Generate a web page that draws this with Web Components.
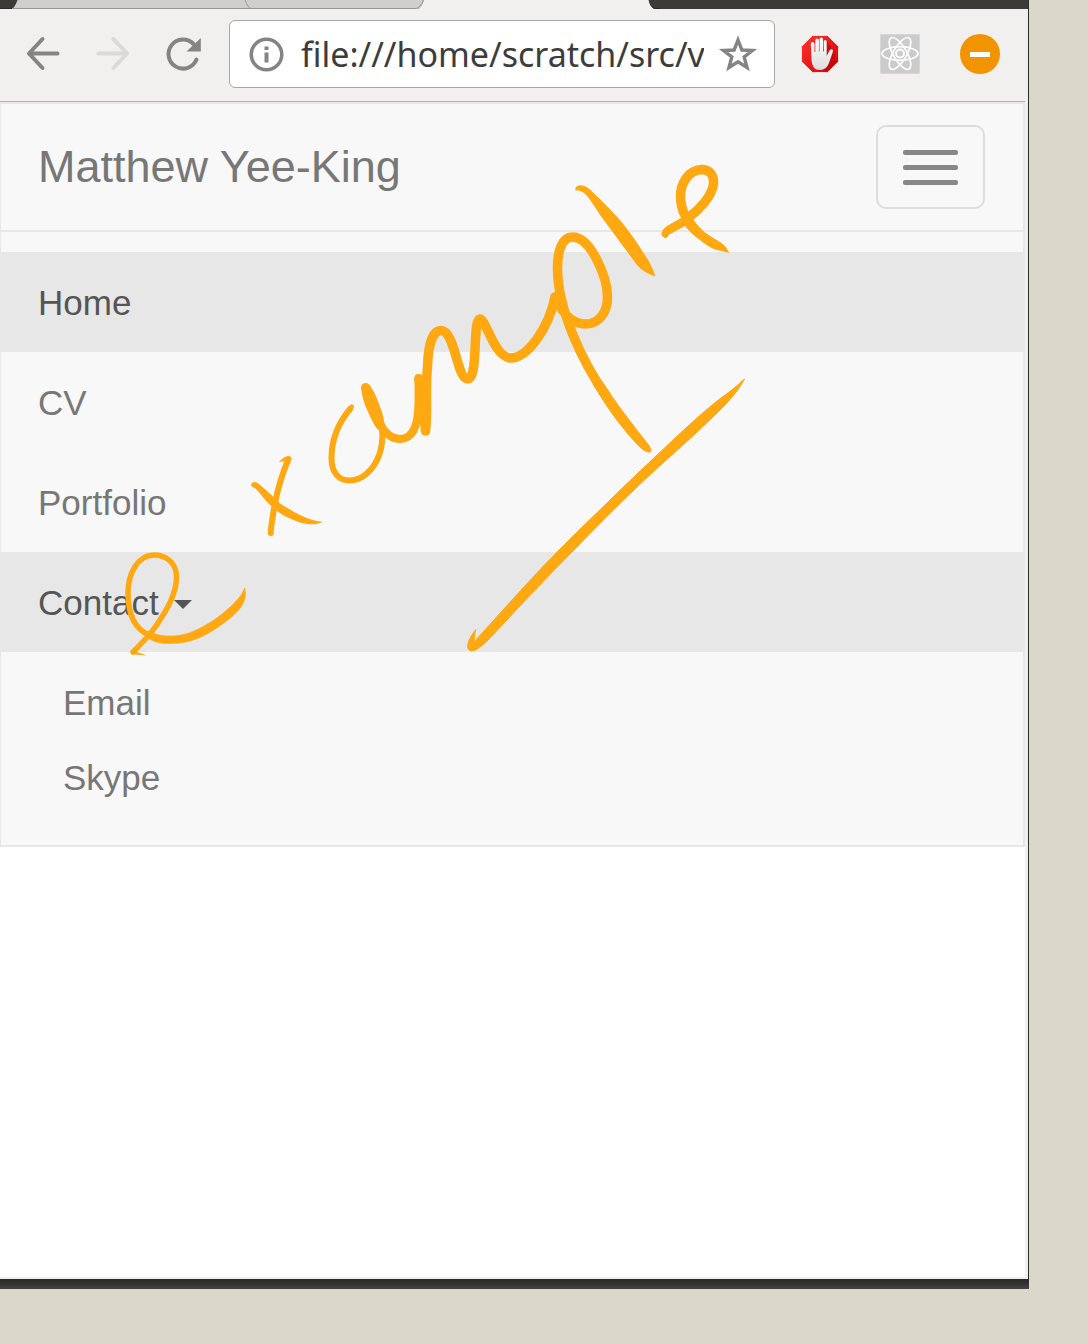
<!DOCTYPE html>
<html lang="en">
<head>
<meta charset="utf-8">
<meta name="viewport" content="width=device-width, initial-scale=1">
<title>Matthew Yee-King</title>
<style>
html, body { margin: 0; }
body { background: #dad8cb; font-family: "Liberation Sans", Arial, sans-serif; }
</style>
</head>
<body>
<desk-view>
  <browser-window>
    <tab-strip slot="tabs"></tab-strip>
    <tool-bar slot="bar" address="file:///home/scratch/src/v"></tool-bar>
    <site-nav brand="Matthew Yee-King">
      <nav-item active>Home</nav-item>
      <nav-item>CV</nav-item>
      <nav-item>Portfolio</nav-item>
      <nav-item active caret>Contact
        <sub-item slot="menu">Email</sub-item>
        <sub-item slot="menu">Skype</sub-item>
      </nav-item>
    </site-nav>
  </browser-window>
  <ink-note slot="ink"></ink-note>
</desk-view>

<script>
function define(name, html, setup) {
  const template = document.createElement('template');
  template.innerHTML = html;
  customElements.define(name, class extends HTMLElement {
    constructor() {
      super();
      this.attachShadow({ mode: 'open' }).append(template.content.cloneNode(true));
    }
    connectedCallback() {
      if (setup) setup(this, this.shadowRoot);
    }
  });
}

define('desk-view', `
<style>
:host { display: flex; box-sizing: border-box; min-height: 100vh; padding: 0 59px 55px 0; position: relative; overflow: hidden; }
::slotted(browser-window) { flex: 1; }
</style>
<slot></slot><slot name="ink"></slot>`);

define('browser-window', `
<style>
:host { display: flex; flex-direction: column; min-width: 0; border-right: 1px solid #2d2c28; background: #f1f0ee; }
main { flex: 1; margin-right: 3px; border-top: 1px solid #b1b1b0; border-bottom: 2px solid #f1f0f0; background: #fff; }
footer { height: 10px; background: linear-gradient(#2b2b2a, #2f2f2e 40%, #454442); margin-right: -1px; }
</style>
<slot name="tabs"></slot><slot name="bar"></slot>
<main><slot></slot></main>
<footer></footer>`);

define('tab-strip', `
<style>
:host { display: block; height: 9px; overflow: hidden; background: #3c3b37; }
svg { display: block; }
</style>
<svg width="660" height="9" viewBox="0 0 660 9" aria-hidden="true">
  <path d="M0 8.5H12" stroke="#2c2b28"/>
  <path d="M12 9Q15 7 17.500 0H424Q421 8.500 418 9Z" fill="#d0cfcd"/>
  <path d="M424 0H649Q651 9 656 9H418Q421 8.500 424 0Z" fill="#f1f0ee"/>
  <path d="M12 8.500H416Q420 8 423.500 0M245 0Q248 8 251 8.500" fill="none" stroke="#999896"/>
  <path d="M649 0Q651 8.500 655 8.500H660" fill="none" stroke="#2c2b28"/>
</svg>`);

define('tool-bar', `
<style>
:host { display: flex; align-items: center; height: 92px; box-sizing: border-box; padding: 0 28px 2px 23px; }
button { width: 40px; height: 40px; padding: 0; border: 0; background: none; flex: none; display: block; }
svg { display: block; }
.moves, .tools { display: flex; }
.moves { gap: 30px; }
.tools { gap: 40px; }
form { flex: 1; min-width: 0; display: flex; align-items: center; height: 68px; box-sizing: border-box; margin: 0 25px 0 26px; padding: 0 16px; border: 1px solid #a8a7a5; border-radius: 6px; background: #fff; }
input { flex: 1; min-width: 0; margin: 0 14px; padding: 0; border: 0; outline: 0; height: 50px; background: none; color: #3c3c3c; font: 34px "Noto Sans", sans-serif; }
</style>
<div class="moves">
  <button aria-label="Back"><svg width="40" height="40" fill="none" stroke="#848484" stroke-width="4" stroke-linecap="round" stroke-linejoin="round"><path d="M19.500 5L6 19.500L19.500 34M6 19.500H34.500"/></svg></button>
  <button aria-label="Forward" disabled><svg width="40" height="40" fill="none" stroke="#dbdad9" stroke-width="4" stroke-linecap="round" stroke-linejoin="round"><path d="M20.500 5L34 19.500L20.500 34M34 19.500H5.500"/></svg></button>
  <button aria-label="Reload"><svg width="40" height="40"><path d="M33.500 25.500A14.500 14.500 0 1 1 30.500 10" fill="none" stroke="#848484" stroke-width="4" stroke-linecap="round"/><path d="M37.800 4V17.500H23.500Z" fill="#848484"/></svg></button>
</div>
<form>
  <svg width="41" height="40" aria-hidden="true"><circle cx="20.500" cy="20.500" r="15.300" fill="none" stroke="#848484" stroke-width="3.500"/><path d="M18.500 12.500h4v3.500h-4zM18.500 18.500h4v10h-4z" fill="#848484"/></svg>
  <input type="text" aria-label="Address">
  <button type="button" aria-label="Bookmark"><svg width="40" height="40"><path d="M20 6L23.900 16L34.500 16.500L26.200 23L29 33.500L20 27.700L11 33.500L13.800 23L5.500 16.500L16.100 16Z" fill="none" stroke="#848484" stroke-width="3.400"/></svg></button>
</form>
<div class="tools">
  <button aria-label="Ad blocker"><svg width="40" height="40">
    <defs><linearGradient id="red" x1="0" y1="0" x2="1" y2="1"><stop stop-color="#ff3434"/><stop offset="1" stop-color="#d40000"/></linearGradient>
    <linearGradient id="palm" x1="0" y1="0" x2="0" y2="1"><stop stop-color="#fff"/><stop offset="1" stop-color="#dcdcdc"/></linearGradient></defs>
    <path d="M12.500 1.500H27.500L38.500 12.500V27.500L27.500 38.500H12.500L1.500 27.500V12.500Z" fill="url(#red)" stroke="#f7dada" stroke-width="1"/>
    <path d="M13 28L25 37L31 34L36 28L34 18L27 7Z" fill="#a00000" opacity=".4"/>
    <path d="M11.500 26L10.800 10Q10.900 8 12.500 8Q14.200 8 14.500 10V18H15.300V6Q15.500 4.500 17 4.500Q18.700 4.500 18.900 6V17.500H19.500V5Q19.700 3.500 21.200 3.500Q23 3.500 23 5V17.500H23.700V7.500Q23.900 6 25.300 6Q26.700 6 26.700 8V22L29.500 16.500Q30.500 14.700 32 15.300Q33.500 16 32.800 18L29 29Q26.500 36 20 36Q12 36 11.500 26Z" fill="url(#palm)"/>
  </svg></button>
  <button aria-label="React developer tools"><svg width="40" height="40" fill="none" stroke="#fff" stroke-width="1.700">
    <path d="M.500 .500H39.500V39.500H.500Z" fill="#cbcbcb" stroke="#d6d6d6" stroke-width="1"/>
    <ellipse cx="20" cy="19.500" rx="18" ry="6.800"/><ellipse cx="20" cy="19.500" rx="18" ry="6.800" transform="rotate(60 20 19.500)"/><ellipse cx="20" cy="19.500" rx="18" ry="6.800" transform="rotate(120 20 19.500)"/>
    <circle cx="20" cy="19.500" r="4" stroke-width="2"/>
  </svg></button>
  <button aria-label="Blocker"><svg width="40" height="40"><circle cx="20" cy="20" r="20" fill="#f29400"/><path d="M10 18H30V23H10Z" fill="#fff"/></svg></button>
</div>`, (host, root) => {
  root.querySelector('input').value = host.getAttribute('address');
});

define('site-nav', `
<style>
:host { display: block; border: 2px solid #e7e7e7; border-left-width: 1px; background: #f8f8f8; }
header { display: flex; justify-content: space-between; align-items: center; height: 126px; padding: 0 38px 0 37px; border-bottom: 2px solid #e7e7e7; }
a { color: #777; font-size: 45px; line-height: 50px; text-decoration: none; }
button { box-sizing: border-box; width: 109px; height: 84px; padding: 0 25px; display: flex; flex-direction: column; justify-content: center; gap: 10px; background: none; border: 2px solid #ddd; border-radius: 10px; }
i { height: 5px; border-radius: 2px; background: #888; align-self: stretch; }
nav { padding: 20px 0 18px; }
</style>
<header><a href="#"></a><button aria-label="Toggle navigation"><i></i><i></i><i></i></button></header>
<nav><slot></slot></nav>`, (host, root) => {
  root.querySelector('a').textContent = host.getAttribute('brand');
});

define('nav-item', `
<style>
:host { display: block; }
a { display: flex; align-items: center; gap: 15px; box-sizing: border-box; height: 100px; padding: 2px 37px 0; color: #777; font-size: 35px; line-height: 50px; text-decoration: none; }
:host([active]) a { background: #e7e7e7; color: #555; }
i { display: none; border: 9px solid transparent; border-top-color: #555; border-bottom: 0; margin-top: 2px; }
:host([caret]) i { display: block; }
:host([caret]) div { padding: 13px 0 12px; }
</style>
<a href="#"><span><slot></slot></span><i></i></a>
<div><slot name="menu"></slot></div>`);

define('sub-item', `
<style>
:host { display: block; }
a { display: flex; align-items: center; height: 75px; padding: 0 62px; color: #777; font-size: 35px; line-height: 50px; text-decoration: none; }
</style>
<a href="#"><slot></slot></a>`);

/* Freehand pen marks laid over the whole desk. */
define('ink-note', `
<style>
:host { position: absolute; top: 0; left: 0; pointer-events: none; }
svg { display: block; }
</style>
<svg width="760" height="670" viewBox="0 0 760 670" role="img" aria-label="example" fill="none" stroke="#ffa812" stroke-linecap="round" stroke-linejoin="round">
  <path stroke-width="5.500" d="M133 652C142 643 149 636 156 626C166 611 177 594 176.500 576C176 562 165 555 154 555C138 555 128 573 128 593C128 615 135 629 149 635"/>
  <path fill="#ffa812" stroke="none" d="M131 653L134 651L147 655.500L135 654.500Z"/>
  <path fill="#ffa812" stroke-width=".6" d="M147 637C154 643 162 643.500 170 643.500C187 643.500 199 639 212 631C225 623 236 614 241 607C246 599 246 595 244.700 588C242 594 240 597 237 600C229 609 217 619 204 626C190 634 180 636 170 636C162 636 156 635 149 631Z"/>
  <path stroke-width="6" d="M288.500 459C282 474 278 488 275 503C273 514 271 525 270.700 533"/>
  <path fill="#ffa812" stroke="none" d="M279 462Q284 456 289 456L287 461Z"/>
  <path fill="#ffa812" stroke="none" d="M257 482.500C263 487 268 492 273.500 497L280 503.500C286 507 292 511 300 515C307 518.500 315 521 323 522C318 524 314 524.300 310 524.300C304 524 299 522.500 293.500 520C288 518 283 515 278 511.700L270 505C264 499 259 492 255 488Q251 487 251 484Q253 481 257 482.500Z"/>
  <path stroke-width="4.500" d="M351.700 406.700C348 410 344 417 340 423"/>
  <path stroke-width="6" d="M350 409C340 421 331.500 438 331.500 458C331.500 473 339 480.500 349.500 480.500C362 480.500 374 470 379.500 454C384 440 383 425 377 410"/>
  <path fill="#ffa812" stroke="none" d="M361 388Q361 383 366 383Q369 383 371.500 388C376 395 378 401 380 407C383 413 384 420 385 427L378 430C373 424 371 418 368 412C364 404 362 396 361 388Z"/>
  <path stroke-width="8" d="M380 424C385 433 391 439 400 439C414 439 418.500 423 418.500 401V378"/>
  <path stroke-width="9.500" d="M419 379L423 406L425.500 431C428 410 425 391 427.500 367C428 347 432 330.500 441 330.500C455 330.500 457 379 467.500 379C479 379 472 319 480 319C486 319 494 357 510.500 358C528 358 549 327 555 297"/>
  <path stroke-width="9.500" d="M555 297C561 311 571 324 586 324C599 324 607.500 312 607.500 297C607.500 278 591 237 572.500 237C562 237 557.500 251 557.500 268C557.500 309 582 362 607 397"/>
  <path fill="#ffa812" stroke-width="1" d="M601 380C617 405 632 424 647 443Q652 449 650.500 452Q645 453 637 444C624 430 614 417 603 400L593 384Z"/>
  <path fill="#ffa812" stroke="none" d="M575.500 190.500Q574.500 186 580 185.300Q586 185 592 191.500C602 201 611 210 620 220C629 231 637 242 643.500 253C648 259 652 266 655.500 276.500C648 274 642 271 637 265L600 215C596 208 592 203 588 197Q582 190 578 190.500Z"/>
  <path stroke-width="9.500" d="M701.500 169.500C710 169.500 714 175 713.500 184C712 196 699 210 689 217"/>
  <path stroke-width="9.500" d="M702 169.500C689 169.500 680 183 680.500 198C681 209 684 216 690 223"/>
  <path fill="#ffa812" stroke="none" d="M661.500 235Q661 230 667 226L681 218L691 220L685 226L671 233.500Q667.500 235 667.500 237Q665 240 661.500 235Z"/>
  <path fill="#ffa812" stroke="none" d="M693 219C697 225 701 229 705 232.500C711 237 717 240 721.500 243Q725 245 729.500 253Q722 251 717 250C710 248 705 244 700 240C694 236 690 232 685 226Z"/>
  <path fill="#ffa812" stroke-width="1" d="M475.500 630Q474 636 474 642L523 588C550 558 579 530 607 503C629 481 652 460 673 440C688 426 702 413 717 401C728 393 736 387 744.500 379C738 391 730 400 720 410C698 432 676 451 653 472C627 496 599 524 573 551C545 579 517 609 490 638Q478 650.500 472 651Q466 650 468 644Q469 638 475.500 630Z"/>
</svg>`);
</script>
</body>
</html>
